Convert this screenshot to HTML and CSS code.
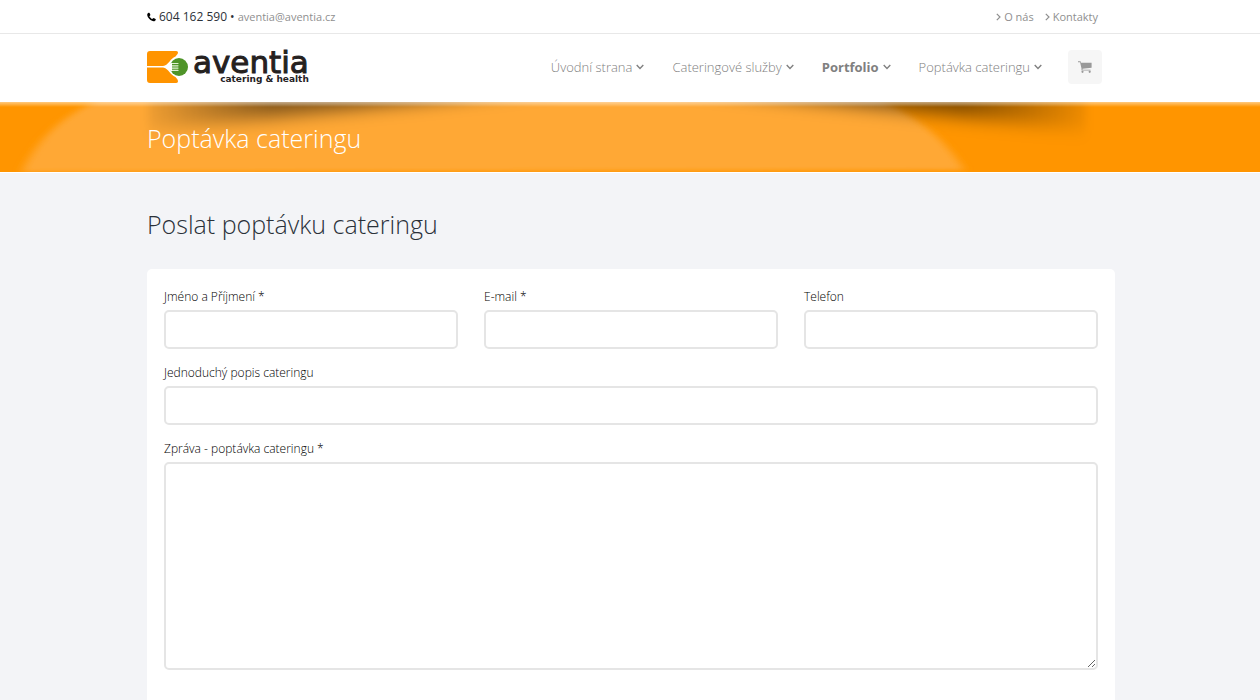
FILE: index.html
```
<!DOCTYPE html>
<html lang="cs">
<head>
<meta charset="utf-8">
<meta name="viewport" content="width=device-width, initial-scale=1">
<title>Poptávka cateringu</title>
<link rel="stylesheet" href="styles.css">
</head>
<body>
<svg class="defs" width="0" height="0" aria-hidden="true">
  <symbol id="chevron-down" viewBox="0 0 8 6"><path d="M0.7 1 L4 4.4 L7.3 1" fill="none" stroke="currentColor" stroke-width="1.4"/></symbol>
  <symbol id="chevron-right" viewBox="0 0 5 8"><path d="M0.8 0.8 L4 4 L0.8 7.2" fill="none" stroke="currentColor" stroke-width="1.2"/></symbol>
</svg>

<div class="topbar">
  <div class="container topbar-row">
    <div class="contact">
      <svg class="phone-icon" viewBox="0 0 10 10" aria-hidden="true"><path d="M0.4 1.6C0.7 0.7 1.6 0.2 2.4 0.2C2.8 0.2 3.8 2.5 3.8 2.8C3.8 3.3 2.7 3.8 2.7 4.2C2.7 4.9 5 7.2 5.8 7.3C6.2 7.3 6.7 6.2 7.2 6.2C7.5 6.2 9.8 7.3 9.8 7.6C9.8 8.6 9.2 9.3 8.3 9.6C5.2 10.7 -0.8 4.900 0.4 1.6Z"/></svg>
      <span>604 162 590 •</span>
      <a class="muted" href="mailto:aventia@aventia.cz">aventia@aventia.cz</a>
    </div>
    <nav class="top-links" aria-label="Informace">
      <a href="#"><svg class="chev-right" aria-hidden="true"><use href="#chevron-right"/></svg>O nás</a>
      <a href="#"><svg class="chev-right" aria-hidden="true"><use href="#chevron-right"/></svg>Kontakty</a>
    </nav>
  </div>
</div>

<header class="header">
  <div class="container header-row">
    <a class="logo" href="#">
      <svg class="logo-mark" viewBox="0 0 42 34" aria-hidden="true">
        <path fill="#ff9400" d="M3 1H29C31 1 31.500 2.500 30.500 4L28.500 6.500C23 8.500 22 15 16 16H0V4Q0 1 3 1Z"/>
        <path fill="#ff9400" d="M0 17.500H16C22 18.500 23 25 28.500 27L30.500 29.500C31.500 31.500 31 33 29 33H3Q0 33 0 30Z"/>
        <circle cx="32" cy="17" r="9" fill="#4f9429"/>
        <path fill="none" stroke="#dff0d2" stroke-width="1.200" stroke-linecap="round" d="M24 13.500H31M24 15.800H31M24 18.100H31M24 20.400H31"/>
        <path fill="#fff" d="M17 16.500Q22 15 25 12.800V21.200Q22 18.500 17 17.200Z"/>
      </svg>
      <span class="logo-text"><span class="logo-name">aventia</span><span class="logo-sub">catering &amp; health</span></span>
    </a>
    <div class="header-side">
      <nav class="main-nav" aria-label="Hlavní menu">
        <a href="#">Úvodní strana<svg class="chev-down" aria-hidden="true"><use href="#chevron-down"/></svg></a>
        <a href="#">Cateringové služby<svg class="chev-down" aria-hidden="true"><use href="#chevron-down"/></svg></a>
        <a class="active" href="#">Portfolio<svg class="chev-down" aria-hidden="true"><use href="#chevron-down"/></svg></a>
        <a href="#">Poptávka cateringu<svg class="chev-down" aria-hidden="true"><use href="#chevron-down"/></svg></a>
      </nav>
      <button class="cart" type="button" aria-label="Košík">
        <svg viewBox="0 0 14 12" aria-hidden="true"><path fill="currentColor" d="M0 0.300H2.600L3 1.700H13.600V6.700L4.500 7.800V8.700H12.600V9.500H3.500V7.600L2.100 1.300H0Z"/><circle cx="4.500" cy="10.800" r="1.100" fill="currentColor"/><circle cx="11.700" cy="10.800" r="1.100" fill="currentColor"/></svg>
      </button>
    </div>
  </div>
</header>

<section class="banner">
  <svg class="banner-art" viewBox="0 0 1260 70" preserveAspectRatio="none" aria-hidden="true">
    <defs>
      <filter id="soft" x="-5%" y="-20%" width="110%" height="140%"><feGaussianBlur stdDeviation="5 2"/></filter>
      <filter id="shade" x="-10%" y="-100%" width="120%" height="300%"><feGaussianBlur stdDeviation="5 9"/></filter>
      <linearGradient id="left" x1="0" x2="1" y1="0" y2="0"><stop offset="0" stop-opacity=".06"/><stop offset=".3" stop-opacity=".48"/><stop offset=".75" stop-opacity=".6"/><stop offset="1" stop-opacity=".3"/></linearGradient>
      <linearGradient id="right" x1="1" x2="0" y1="0" y2="0"><stop offset="0" stop-opacity=".06"/><stop offset=".3" stop-opacity=".48"/><stop offset=".75" stop-opacity=".6"/><stop offset="1" stop-opacity=".3"/></linearGradient>
      <linearGradient id="edge" x1="0" x2="0" y1="0" y2="1"><stop offset="0" stop-color="#fff" stop-opacity=".5"/><stop offset="1" stop-color="#fff" stop-opacity="0"/></linearGradient>
    </defs>
    <path filter="url(#soft)" fill="#ffa834" d="M22 70C36 38 64 12 100 -2L878 -2C914 12 946 38 964 68Z"/>
    <path filter="url(#shade)" fill="url(#left)" d="M148 -24H560V-16C400 2 290 12 148 28Z"/>
    <path filter="url(#shade)" fill="url(#right)" d="M1086 -24H674V-16C834 2 944 12 1086 28Z"/>
    <rect width="1260" height="5" fill="url(#edge)"/>
  </svg>
  <div class="container"><h1>Poptávka cateringu</h1></div>
</section>

<main class="container">
  <h2>Poslat poptávku cateringu</h2>
  <form class="card">
    <div class="row">
      <div class="field"><label for="name">Jméno a Příjmení *</label><input id="name" type="text"></div>
      <div class="field"><label for="email">E-mail *</label><input id="email" type="email"></div>
      <div class="field"><label for="phone">Telefon</label><input id="phone" type="tel"></div>
    </div>
    <div class="field"><label for="subject">Jednoduchý popis cateringu</label><input id="subject" type="text"></div>
    <div class="field"><label for="message">Zpráva - poptávka cateringu *</label><textarea id="message" rows="10"></textarea></div>
  </form>
</main>
</body>
</html>
```
FILE: styles.css
```
* { box-sizing: border-box; }
body {
  margin: 0;
  background: #f3f4f7;
  color: #2a3139;
  font-family: "Open Sans", "Noto Sans", sans-serif;
  font-size: 12px;
  line-height: 20px;
}
a { color: inherit; text-decoration: none; }
.defs { position: absolute; }
.container { width: 100%; max-width: 970px; margin: 0 auto; padding-left: 2px; }

.topbar { background: #fff; border-bottom: 1px solid #e8e8e8; }
.topbar-row { display: flex; justify-content: space-between; padding-top: 7px; padding-bottom: 6px; padding-right: 17px; }
.contact { display: flex; align-items: center; gap: 3px; color: #2c3138; }
.phone-icon { width: 9px; height: 10px; }
.muted, .top-links { color: #8f8f8f; font-size: 11px; }
.top-links { display: flex; gap: 11px; }
.top-links a { display: flex; align-items: center; gap: 3px; }
.chev-right { width: 5px; height: 8px; }

.header { background: #fff; }
.header-row { display: flex; justify-content: space-between; align-items: center; padding-top: 16px; padding-bottom: 18px; padding-right: 13px; }
.logo { display: flex; align-items: center; gap: 4px; color: #25211f; }
.logo-mark { width: 42px; height: 34px; }
.logo-text { display: flex; flex-direction: column; align-items: flex-end; }
.logo-name { font: 400 31px/24px "DejaVu Sans", sans-serif; -webkit-text-stroke: 1px currentColor; }
.logo-sub { font: 700 9px/10px "DejaVu Sans", sans-serif; }
.header-side { display: flex; align-items: center; gap: 26px; }
.main-nav { display: flex; gap: 28px; font-size: 13px; font-weight: 300; color: #808080; }
.main-nav a { display: flex; align-items: center; gap: 4px; white-space: nowrap; }
.main-nav .active { font-weight: 700; }
.chev-down { width: 8px; height: 6px; }
.cart { display: grid; place-items: center; width: 34px; height: 34px; padding: 0; border: 0; border-radius: 4px; background: #f6f6f6; color: #999; }
.cart svg { width: 14px; height: 12px; }

.banner { position: relative; background: #ff9500; border-bottom: 1px solid #fff; overflow: hidden; }
.banner-art { position: absolute; inset: 0; width: 100%; height: 100%; }
.banner .container { position: relative; padding-top: 18px; padding-bottom: 16px; }
h1, h2 { margin: 0; font-size: 25px; line-height: 36px; font-weight: 300; }
h1 { color: #fff; }
h2 { padding: 33px 0 27px; }

.card { display: flex; flex-direction: column; gap: 14px; padding: 18px 17px 48px; border-radius: 5px; background: #fff; }
.row { display: grid; grid-template-columns: repeat(3, 1fr); gap: 26px; }
.field { display: flex; flex-direction: column; gap: 3px; min-width: 0; }
.field label { font-weight: 300; color: #000; }
.field input, .field textarea { width: 100%; border: 2px solid #e5e5e5; border-radius: 5px; background: #fff; font: inherit; padding: 8px 12px; }
.field input { height: 39px; }
.field textarea { height: 208px; resize: vertical; }
@media (max-width: 760px) {
  .row { grid-template-columns: 1fr; gap: 14px; }
  .header-row { flex-wrap: wrap; }
  .main-nav { flex-wrap: wrap; }
}
```
